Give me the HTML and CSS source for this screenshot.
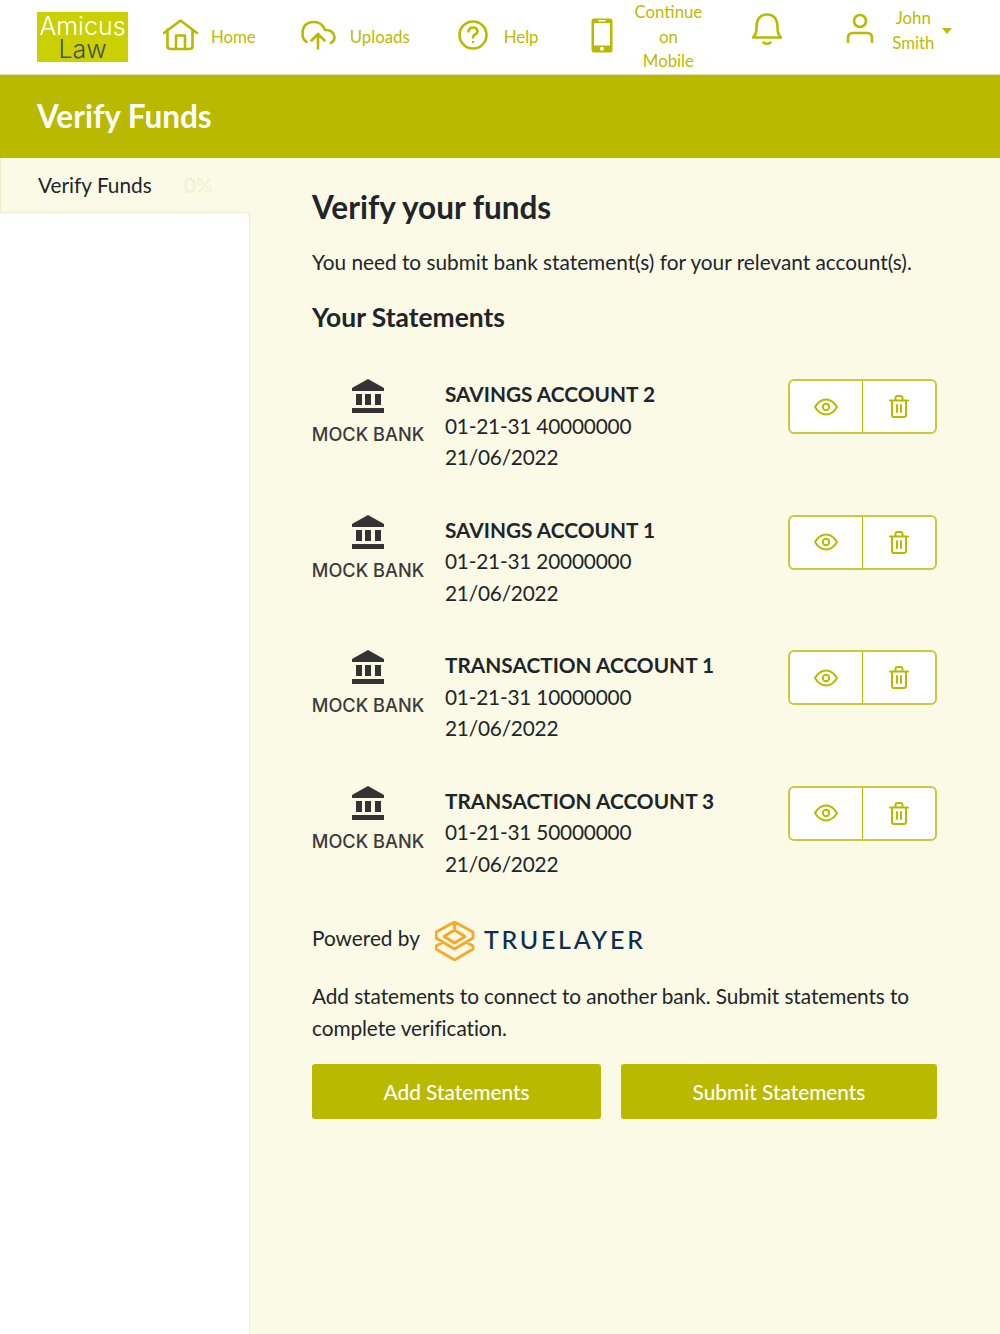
FILE: index.html
```html
<!DOCTYPE html>
<html lang="en">
<head>
    <meta charset="UTF-8">
    <meta name="viewport" content="width=device-width, initial-scale=1.0">
    <title>Verify Funds</title>
    <link rel="stylesheet" href="styles.css">
</head>
<body>
    <header class="topbar">
        <div class="logo">
            <span class="logo-top">Amicus</span>
            <span class="logo-bottom">Law</span>
        </div>
        <a class="nav-item nav-home">
            <svg class="nav-icon" width="36" height="32" viewBox="0 0 36 32"><path d="M1 14 17.500 1.500 34 14M4.500 10.500V27q0 3 3 3h19q3 0 3-3V10.500M13 30V16.500h9V30"/></svg>
            <span>Home</span>
        </a>
        <a class="nav-item nav-uploads">
            <svg class="nav-icon" width="36" height="30" viewBox="0 0 36 30"><path d="M5.500 22Q1.500 19 1.500 14 1.500 2 13 2q8 0 11 8 9 0 9.500 7 0 4-3.500 6M17 28.500V15M10.500 20.500 17 14l6.500 6.500"/></svg>
            <span>Uploads</span>
        </a>
        <a class="nav-item nav-help">
            <svg class="nav-icon" width="30" height="30" viewBox="0 0 30 30"><circle cx="15" cy="15" r="13.500"/><path d="M10.500 11.500q.5-4 4.500-4t4.500 3.500q0 2.500-2.500 3.500-2 1-2 3"/><circle class="fill" cx="15" cy="22" r="1.200"/></svg>
            <span>Help</span>
        </a>
        <a class="nav-item nav-mobile">
            <svg class="nav-icon" width="22" height="35" viewBox="0 0 22 35"><path class="fill" fill-rule="evenodd" d="M3 .5h16q2.500 0 2.500 2.500v29q0 2.500-2.500 2.500H3Q.5 34.500.5 32V3Q.5.5 3 .5ZM3 5v22.500h16V5ZM7.500 2v1.500h7V2ZM11 28.700a2 2 0 1 0 0 4 2 2 0 0 0 0-4Z"/></svg>
            <span class="nav-wrap">Continue<br>on<br>Mobile</span>
        </a>
        <a class="nav-item nav-bell">
            <svg class="nav-icon" width="30" height="33" viewBox="0 0 30 33"><path d="M1 24.500h28q-3.500-3-3.500-10Q25.500 1.500 15 1.500T4.500 14.500q0 7-3.500 10ZM11.500 29.500q3.500 2.500 7 0"/></svg>
        </a>
        <a class="nav-item nav-user">
            <svg class="nav-icon" width="28" height="30" viewBox="0 0 28 30"><circle cx="14" cy="8" r="6"/><path d="M2 29v-4q0-5 5-5h14q5 0 5 5v4"/></svg>
            <span class="nav-wrap">John<br>Smith</span>
            <span class="caret"></span>
        </a>
    </header>

    <div class="banner">Verify Funds</div>

    <div class="page">
        <aside class="sidebar">
            <div class="side-item">
                <span>Verify Funds</span>
                <span class="side-pct">0%</span>
            </div>
        </aside>

        <main class="content">
            <h1>Verify your funds</h1>
            <p class="intro">You need to submit bank statement(s) for your relevant account(s).</p>
            <h2>Your Statements</h2>

            <div class="statements">
                <div class="statement">
                    <div class="bank">
                        <svg class="bank-icon" width="32" height="35" viewBox="0 0 32 35"><path d="M16 0 32 9v3H0V9ZM4 15h6v11H4ZM13 15h6v11h-6ZM23 15h6v11h-6ZM0 29h32v5H0Z"/></svg>
                        <span class="bank-name">MOCK BANK</span>
                    </div>
                    <div class="details">
                        <strong>SAVINGS ACCOUNT 2</strong>
                        <span>01-21-31 40000000</span>
                        <span>21/06/2022</span>
                    </div>
                    <div class="actions">
                        <button><svg width="24" height="18" viewBox="0 0 24 18"><path d="M1 9q4.500-7.500 11-7.500T23 9q-4.500 7.500-11 7.500T1 9Z"/><circle cx="12" cy="9" r="3.200"/></svg></button>
                        <button><svg width="20" height="23" viewBox="0 0 20 23"><path d="M1 5.500h18M3 5.500V20q0 2 2 2h10q2 0 2-2V5.500M6.500 5.500V3q0-2 2-2h3q2 0 2 2v2.500M8 10v7M12 10v7"/></svg></button>
                    </div>
                </div>

                <div class="statement">
                    <div class="bank">
                        <svg class="bank-icon" width="32" height="35" viewBox="0 0 32 35"><path d="M16 0 32 9v3H0V9ZM4 15h6v11H4ZM13 15h6v11h-6ZM23 15h6v11h-6ZM0 29h32v5H0Z"/></svg>
                        <span class="bank-name">MOCK BANK</span>
                    </div>
                    <div class="details">
                        <strong>SAVINGS ACCOUNT 1</strong>
                        <span>01-21-31 20000000</span>
                        <span>21/06/2022</span>
                    </div>
                    <div class="actions">
                        <button><svg width="24" height="18" viewBox="0 0 24 18"><path d="M1 9q4.500-7.500 11-7.500T23 9q-4.500 7.500-11 7.500T1 9Z"/><circle cx="12" cy="9" r="3.200"/></svg></button>
                        <button><svg width="20" height="23" viewBox="0 0 20 23"><path d="M1 5.500h18M3 5.500V20q0 2 2 2h10q2 0 2-2V5.500M6.500 5.500V3q0-2 2-2h3q2 0 2 2v2.500M8 10v7M12 10v7"/></svg></button>
                    </div>
                </div>

                <div class="statement">
                    <div class="bank">
                        <svg class="bank-icon" width="32" height="35" viewBox="0 0 32 35"><path d="M16 0 32 9v3H0V9ZM4 15h6v11H4ZM13 15h6v11h-6ZM23 15h6v11h-6ZM0 29h32v5H0Z"/></svg>
                        <span class="bank-name">MOCK BANK</span>
                    </div>
                    <div class="details">
                        <strong>TRANSACTION ACCOUNT 1</strong>
                        <span>01-21-31 10000000</span>
                        <span>21/06/2022</span>
                    </div>
                    <div class="actions">
                        <button><svg width="24" height="18" viewBox="0 0 24 18"><path d="M1 9q4.500-7.500 11-7.500T23 9q-4.500 7.500-11 7.500T1 9Z"/><circle cx="12" cy="9" r="3.200"/></svg></button>
                        <button><svg width="20" height="23" viewBox="0 0 20 23"><path d="M1 5.500h18M3 5.500V20q0 2 2 2h10q2 0 2-2V5.500M6.500 5.500V3q0-2 2-2h3q2 0 2 2v2.500M8 10v7M12 10v7"/></svg></button>
                    </div>
                </div>

                <div class="statement">
                    <div class="bank">
                        <svg class="bank-icon" width="32" height="35" viewBox="0 0 32 35"><path d="M16 0 32 9v3H0V9ZM4 15h6v11H4ZM13 15h6v11h-6ZM23 15h6v11h-6ZM0 29h32v5H0Z"/></svg>
                        <span class="bank-name">MOCK BANK</span>
                    </div>
                    <div class="details">
                        <strong>TRANSACTION ACCOUNT 3</strong>
                        <span>01-21-31 50000000</span>
                        <span>21/06/2022</span>
                    </div>
                    <div class="actions">
                        <button><svg width="24" height="18" viewBox="0 0 24 18"><path d="M1 9q4.500-7.500 11-7.500T23 9q-4.500 7.500-11 7.500T1 9Z"/><circle cx="12" cy="9" r="3.200"/></svg></button>
                        <button><svg width="20" height="23" viewBox="0 0 20 23"><path d="M1 5.500h18M3 5.500V20q0 2 2 2h10q2 0 2-2V5.500M6.500 5.500V3q0-2 2-2h3q2 0 2 2v2.500M8 10v7M12 10v7"/></svg></button>
                    </div>
                </div>
            </div>

            <div class="powered">
                <span class="powered-label">Powered by</span>
                <svg class="tl-icon" width="40" height="40" viewBox="0 0 40 40"><path d="M19.500 1 38 11v6L19.500 28 1 17v-6ZM19.500 9 30 15.500 19.500 22 9 15.500ZM19.500 1v8M8 21l-7 4v3l18.500 11L38 28v-3l-7-4"/></svg>
                <span class="tl-name">TRUELAYER</span>
            </div>

            <p class="note">Add statements to connect to another bank. Submit statements to complete verification.</p>

            <div class="buttons">
                <button class="btn btn-add">Add Statements</button>
                <button class="btn btn-submit">Submit Statements</button>
            </div>
        </main>
    </div>
</body>
</html>
```

FILE: styles.css
```css
* {
    box-sizing: border-box;
}
html, body {
    height: 100%;
}
body {
    margin: 0;
    font-family: Lato, sans-serif;
    font-size: 20.800px;
    line-height: 31.4px;
    color: #212529;
    background-color: #fafae6;
    display: flex;
    flex-direction: column;
    min-height: 1334px;
}

/* top bar */
.topbar {
    height: 75px;
    flex-shrink: 0;
    background-color: #fff;
    border-bottom: 1px solid #e2e0b0;
    display: flex;
    align-items: center;
    padding-left: 37px;
}
.logo {
    width: 91px;
    height: 50px;
    margin-top: -1px;
    background-color: #cbd000;
    font-family: Inter, "Liberation Sans", sans-serif;
    display: flex;
    flex-direction: column;
    align-items: center;
    font-size: 25px;
    line-height: 23px;
    font-weight: 300;
    padding-top: 3px;
}
.logo-top {
    color: #fff;
}
.logo-bottom {
    color: #45505a;
}
.nav-item {
    display: flex;
    align-items: center;
    font-size: 16.800px;
    line-height: 24.600px;
    color: #bbbb00;
    text-align: center;
}
.nav-icon {
    fill: none;
    stroke: #b9b900;
    stroke-width: 2.600;
    stroke-linecap: round;
    stroke-linejoin: round;
    flex-shrink: 0;
    margin-bottom: 4px;
}
.nav-icon .fill {
    fill: #b9b900;
    stroke: none;
}
.nav-home {
    margin-left: 35px;
    gap: 12px;
}
.nav-uploads {
    margin-left: 45px;
    gap: 13px;
}
.nav-help {
    margin-left: 48px;
    gap: 16px;
}
.nav-mobile {
    margin-left: 52px;
    gap: 22px;
}
.nav-bell {
    margin-left: 50px;
    margin-bottom: 11px;
}
.nav-user {
    margin-left: 64px;
    gap: 18px;
    margin-bottom: 12px;
}
.nav-user .nav-icon {
    margin-bottom: 6px;
}
.caret {
    width: 0;
    height: 0;
    border-left: 5.500px solid transparent;
    border-right: 5.500px solid transparent;
    border-top: 6px solid #bbbb00;
    margin-left: -10px;
}

/* banner */
.banner {
    height: 83px;
    flex-shrink: 0;
    background-color: #b9b900;
    color: #fff;
    font-size: 31.500px;
    font-weight: 700;
    line-height: 82px;
    padding-left: 37px;
}

/* page */
.page {
    flex: 1;
    display: flex;
}
.sidebar {
    width: 250px;
    flex-shrink: 0;
    background-color: #fff;
    border-right: 1px solid #eeeecc;
}
.side-item {
    height: 55px;
    width: 250px;
    background-color: #fafae6;
    border-left: 1px solid #eeeecc;
    border-bottom: 1px solid #eeeecc;
    display: flex;
    align-items: center;
    padding-left: 37px;
    gap: 32px;
}
.side-pct {
    color: #f0f2cc;
}
.content {
    flex: 1;
    padding: 27px 63px 0 62px;
}
h1 {
    margin: 0;
    font-size: 31.500px;
    line-height: 44px;
    font-weight: 700;
}
.intro {
    margin: 17px 0 0;
}
h2 {
    margin: 22px 0 0;
    font-size: 26.400px;
    line-height: 36px;
    font-weight: 700;
}

/* statements */
.statements {
    margin-top: 44px;
    display: flex;
    flex-direction: column;
    gap: 41px;
}
.statement {
    display: flex;
    height: 94.500px;
}
.bank {
    width: 112px;
    display: flex;
    flex-direction: column;
    align-items: center;
}
.bank-icon {
    fill: #333;
    flex-shrink: 0;
}
.bank-name {
    font-family: Inter, sans-serif;
    font-size: 18.200px;
    font-weight: 500;
    color: #3a3a3a;
    line-height: 22px;
    margin-top: 9px;
    white-space: nowrap;
}
.details {
    margin-left: 21px;
    margin-top: -1px;
    flex: 1;
    display: flex;
    flex-direction: column;
}
.details strong {
    font-weight: 700;
}
.details span {
    letter-spacing: -0.2px;
}
.actions {
    width: 149px;
    height: 55px;
    display: flex;
    border: 2px solid #c9c93c;
    border-radius: 6px;
    background-color: #fff;
    overflow: hidden;
}
.actions button {
    flex: 1;
    border: none;
    background: none;
    padding: 0;
    display: flex;
    align-items: center;
    justify-content: center;
}
.actions button + button {
    border-left: 1px solid #b9b900;
}
.actions svg {
    fill: none;
    stroke: #b9b900;
    stroke-width: 2;
    stroke-linecap: round;
    stroke-linejoin: round;
}

/* powered by */
.powered {
    margin-top: 41px;
    height: 40px;
    display: flex;
    align-items: center;
}
.powered-label {
    margin-bottom: 7px;
}
.tl-icon {
    margin-left: 15px;
    fill: none;
    stroke: #f9a825;
    stroke-width: 2.800;
    stroke-linejoin: round;
    flex-shrink: 0;
}
.tl-name {
    margin-left: 9px;
    margin-bottom: 3px;
    font-size: 25px;
    font-weight: 500;
    letter-spacing: 2.700px;
    color: #0e2d52;
}
.note {
    margin: 19px 0 0;
    letter-spacing: -0.07px;
}

/* buttons */
.buttons {
    margin-top: 21px;
    display: flex;
    gap: 20px;
}
.btn {
    height: 55px;
    border: none;
    border-radius: 3px;
    background-color: #b9b900;
    color: #fff;
    font-family: Lato, sans-serif;
    font-size: 20.800px;
    font-weight: 500;
}
.btn-add {
    width: 289px;
}
.btn-submit {
    width: 316px;
}
```
